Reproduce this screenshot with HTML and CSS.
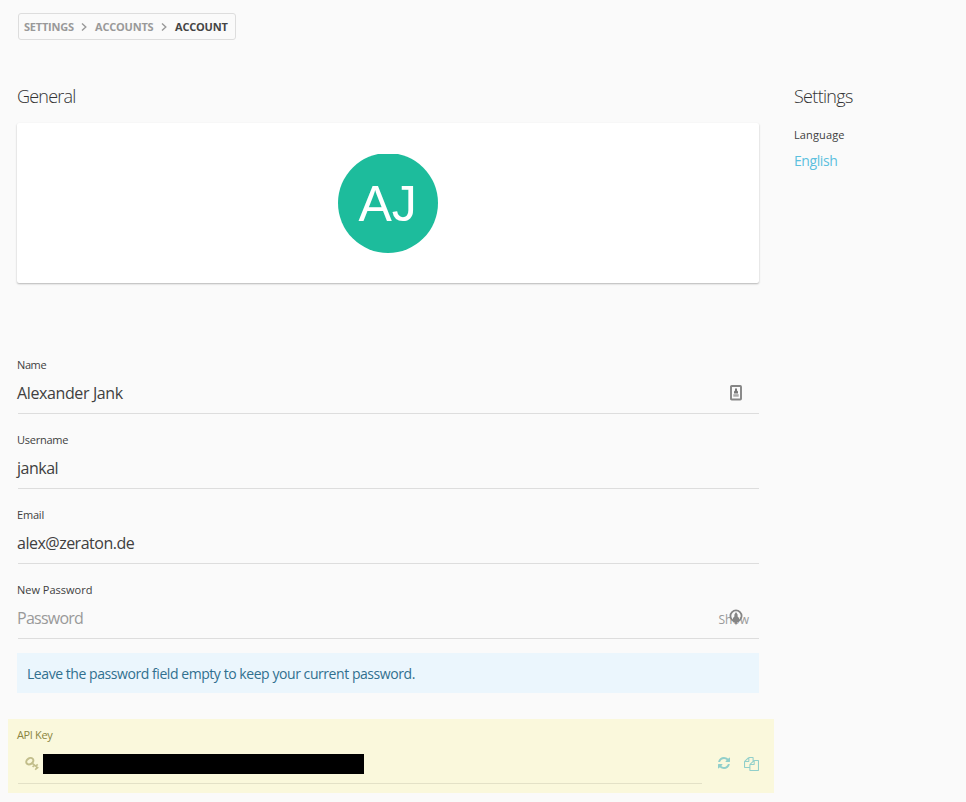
FILE: index.html
```html
<!DOCTYPE html>
<html lang="en">
<head>
<meta charset="utf-8">
<title>Account</title>
<link rel="stylesheet" href="styles.css">
</head>
<body>
<nav class="crumbs">
  <span class="c1">SETTINGS</span>
  <svg width="6" height="8" viewBox="0 0 6 8"><path d="M1 .5 4.800 4 1 7.500"/></svg>
  <span class="c2">ACCOUNTS</span>
  <svg width="6" height="8" viewBox="0 0 6 8"><path d="M1 .5 4.800 4 1 7.500"/></svg>
  <span class="current">ACCOUNT</span>
</nav>
<div class="columns">
  <main>
    <h2 class="general">General</h2>
    <section class="card">
      <svg width="100" height="100" viewBox="0 0 100 100"><circle cx="50" cy="49" r="50" fill="#1dbc9c"/><text x="49.6" y="66.500" text-anchor="middle" class="initials">AJ</text></svg>
    </section>
    <div class="field">
      <label class="l-name">Name</label>
      <div class="value"><span class="v-name">Alexander Jank</span>
        <svg class="badge" width="12" height="16" viewBox="0 0 12 16"><rect x="1" y="1" width="10" height="13.500" rx=".7" fill="#fafafa" stroke="#858585" stroke-width="1.900"/><path d="M5 3.500h2v2l1 1v2H4v-2l1-1z" fill="#777"/><path d="M3.300 9.200h5.400v2.500H3.300z" fill="#aaa"/></svg>
      </div>
    </div>
    <div class="field">
      <label class="l-user">Username</label>
      <div class="value"><span class="v-user">jankal</span></div>
    </div>
    <div class="field">
      <label class="l-email">Email</label>
      <div class="value"><span class="v-email">alex@zeraton.de</span></div>
    </div>
    <div class="field">
      <label class="l-pass">New Password</label>
      <div class="value"><span class="placeholder">Password</span>
        <span class="show">Show<svg class="lock" width="14" height="17" viewBox="0 0 14 17"><circle cx="7" cy="7" r="5.600" fill="none" stroke="#858585" stroke-width="1.800"/><path d="M7 3 5.400 5.500v2L4 9v3h1.500L7 16.500 8.500 12H10V9L8.600 7.500v-2z" fill="#858585"/></svg></span>
      </div>
    </div>
    <p class="notice"><span>Leave the password field empty to keep your current password.</span></p>
    <section class="api">
      <label class="l-api">API Key</label>
      <div class="api-row">
        <div class="key-value">
          <svg width="14" height="14" viewBox="0 0 14 14" fill="none" stroke="#c2be8b" stroke-width="2"><ellipse cx="4.800" cy="4.200" rx="3.800" ry="2.900" transform="rotate(-35 4.800 4.200)"/><path d="M7 6.200 13.300 11.200M9.300 8l-1.600 2M12.300 10.300l-2 2.400M11 9l1.700-1.600" stroke-width="1.700"/></svg>
          <span class="redacted"></span>
        </div>
        <svg class="refresh" width="14" height="14" viewBox="0 0 1792 1792"><path d="M1639 1056q0 5-1 7-64 268-268 434.500t-478 166.500q-146 0-282.500-55t-243.500-157l-129 129q-19 19-45 19t-45-19-19-45v-448q0-26 19-45t45-19h448q26 0 45 19t19 45-19 45l-137 137q71 66 161 102t187 36q134 0 250-65t186-179q11-17 53-117 8-23 30-23h192q13 0 22.500 9.500t9.500 22.500zm25-800v448q0 26-19 45t-45 19h-448q-26 0-45-19t-19-45 19-45l138-138q-148-137-349-137-134 0-250 65t-186 179q-11 17-53 117-8 23-30 23h-199q-13 0-22.500-9.500t-9.500-22.500v-7q65-268 270-434.500t480-166.500q146 0 284 55.500t245 156.500l130-129q19-19 45-19t45 19 19 45z"/></svg>
        <svg class="copy" width="15" height="14" viewBox="0 0 1792 1792" preserveAspectRatio="none"><path d="M1696 384q40 0 68 28t28 68v1216q0 40-28 68t-68 28h-960q-40 0-68-28t-28-68v-288h-544q-40 0-68-28t-28-68v-672q0-40 20-88t48-76l408-408q28-28 76-48t88-20h416q40 0 68 28t28 68v328q68-40 128-40h416zm-544 213l-299 299h299v-299zm-640-384l-299 299h299v-299zm196 647l316-316v-416h-384v416q0 40-28 68t-68 28h-416v640h512v-256q0-40 20-88t48-76zm956 804v-1152h-384v416q0 40-28 68t-68 28h-416v640h896z"/></svg>
      </div>
    </section>
  </main>
  <aside>
    <h2 class="settings">Settings</h2>
    <label class="l-lang">Language</label>
    <a class="english">English</a>
  </aside>
</div>
</body>
</html>
```
FILE: styles.css
```css
* { box-sizing: border-box; }
body { margin: 0; padding: 13px 0 0 17px; height: 802px; overflow: hidden; background: #fafafa; color: #404040; font-family: "Open Sans", "Noto Sans", sans-serif; }
svg { display: block; flex: none; }
span, label, a { white-space: nowrap; }
.crumbs { display: flex; align-items: center; width: 218px; height: 27px; margin-left: 1px; padding-left: 5px; border: 1px solid #ddd; border-radius: 3px; color: #999; font-size: 11px; font-weight: 700; }
.crumbs svg { margin: 0 8px 0 7px; fill: none; stroke: #999; stroke-width: 1.4; }
.crumbs span { width: 50px; letter-spacing: -.23px; }
.crumbs .c2 { width: 59px; letter-spacing: -.2px; }
.crumbs .current { color: #444; letter-spacing: -.2px; }
.columns { display: flex; gap: 35px; }
main { width: 742px; }
h2 { margin: 42px 0 13px; height: 28px; line-height: 28px; font-size: 18px; font-weight: 300; color: #333; letter-spacing: -.8px; }
.settings { letter-spacing: -.7px; }
.card { height: 160px; display: flex; justify-content: center; padding-top: 31px; margin-bottom: 56px; background: #fff; border-radius: 2px; box-shadow: 0 1px 2px rgba(0,0,0,.28); }
.initials { font: 50px "Liberation Sans", sans-serif; fill: #fff; }
.field { height: 75px; padding-top: 17px; }
label { display: block; height: 18px; line-height: 18px; font-size: 11px; }
.l-name { letter-spacing: -.4px; }
.l-user { letter-spacing: -.25px; }
.l-email { letter-spacing: -.2px; }
.l-api { letter-spacing: -.35px; }
.l-lang { letter-spacing: .12px; }
.value { display: flex; justify-content: space-between; height: 40px; padding-right: 17px; line-height: 39px; font-size: 16px; background: linear-gradient(#ddd,#ddd) 1px 100% / 741px 1px no-repeat; }
.v-name { letter-spacing: -.38px; }
.v-user { letter-spacing: -.5px; }
.v-email { letter-spacing: -.5px; }
.badge { margin-top: 11px; }
.placeholder { color: #999; letter-spacing: -.75px; }
.show { position: relative; margin-right: -7px; font-size: 12px; line-height: 41px; color: #999; }
.lock { position: absolute; left: 10px; top: 10px; }
.notice { margin: 14px 0 26px; padding-left: 10px; height: 40px; line-height: 42px; background: #ebf6fd; color: #31708f; font-size: 14px; letter-spacing: -.44px; }
.api { margin: 0 -15px 0 -9px; padding: 7px 0 0 9px; height: 74px; background: #faf8dc; color: #8a8540; }
.api-row { display: flex; height: 40px; }
.key-value { display: flex; width: 685px; height: 40px; padding: 10px 0 0 8px; background: linear-gradient(#e3e1c7,#e3e1c7) 1px 100% / 684px 1px no-repeat; }
.key-value svg { margin-top: 3px; }
.redacted { width: 321px; height: 20px; margin-left: 4px; background: #000; }
.refresh { margin: 12px 0 0 15px; fill: #91cfca; }
.copy { margin: 13px 0 0 13px; fill: #91cfca; }
.english { display: block; margin-top: 7px; line-height: 20px; font-size: 14px; color: #5bc0de; letter-spacing: -.43px; }
aside h2 { margin-bottom: 16px; }
```
